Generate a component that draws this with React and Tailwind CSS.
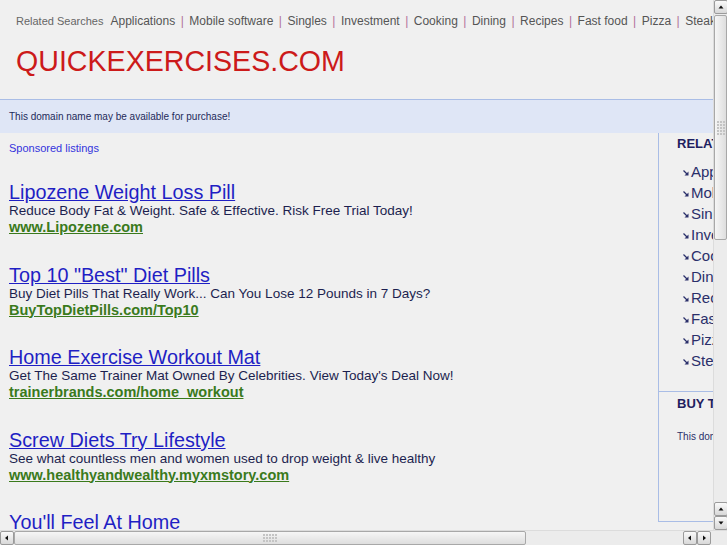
import React from "react";

const related = [
  "Applications",
  "Mobile software",
  "Singles",
  "Investment",
  "Cooking",
  "Dining",
  "Recipes",
  "Fast food",
  "Pizza",
  "Steak",
];

const ads = [
  {
    title: "Lipozene Weight Loss Pill",
    desc: "Reduce Body Fat & Weight. Safe & Effective. Risk Free Trial Today!",
    url: "www.Lipozene.com",
  },
  {
    title: 'Top 10 "Best" Diet Pills',
    desc: "Buy Diet Pills That Really Work... Can You Lose 12 Pounds in 7 Days?",
    url: "BuyTopDietPills.com/Top10",
  },
  {
    title: "Home Exercise Workout Mat",
    desc: "Get The Same Trainer Mat Owned By Celebrities. View Today's Deal Now!",
    url: "trainerbrands.com/home_workout",
  },
  {
    title: "Screw Diets Try Lifestyle",
    desc: "See what countless men and women used to drop weight & live healthy",
    url: "www.healthyandwealthy.myxmstory.com",
  },
  {
    title: "You'll Feel At Home",
    desc: "Find the best deals online today.",
    url: "www.example.com",
  },
];

const Arrow = ({ dir }) => {
  const pts = {
    up: "1.5,5.5 6.5,5.5 4,2.5",
    down: "1.5,2.5 6.5,2.5 4,5.5",
    left: "5,1.5 5,6.5 2,4",
    right: "3,1.5 3,6.5 6,4",
  };
  return (
    <svg width="8" height="8" viewBox="0 0 8 8">
      <polygon points={pts[dir]} fill="#111" />
    </svg>
  );
};

const ScrollBtn = ({ dir }) => (
  <div className="w-[14px] h-[14px] flex items-center justify-center rounded-[2px] border border-[#9a9a9a] bg-gradient-to-b from-[#fafafa] to-[#d8d8d8]">
    <Arrow dir={dir} />
  </div>
);

const Grip = ({ vertical }) => (
  <div className={vertical ? "grid grid-cols-3 gap-[1px]" : "grid grid-cols-5 gap-[1px]"}>
    {Array.from({ length: 15 }).map((_, i) => (
      <div key={i} className="w-[2px] h-[2px] bg-[#c4c4c4]" />
    ))}
  </div>
);

const SmallArrow = () => (
  <svg width="6" height="6" viewBox="0 0 6 6" className="mr-[2px] shrink-0">
    <path d="M0.5 0.5 L4 4" stroke="#2a2f6a" strokeWidth="1.2" />
    <polygon points="5.5,1.5 5.5,5.5 1.5,5.5" fill="#2a2f6a" />
  </svg>
);

export default function App() {
  return (
    <div
      className="w-[727px] h-[545px] flex flex-col overflow-hidden bg-[#f0f0f0]"
      style={{ fontFamily: '"Liberation Sans", Arial, sans-serif' }}
    >
      <div className="flex flex-1 min-h-0">
        {/* page viewport */}
        <div className="flex-1 overflow-hidden">
          <div className="w-[940px]">
            {/* header */}
            <div className="pl-4 pt-[14px] pb-[22px]">
              <div className="flex items-baseline leading-[14px] whitespace-nowrap">
                <span className="text-[11px] text-[#666] mr-[7px]">Related Searches</span>
                {related.map((r, i) => (
                  <span key={r} className="flex items-baseline">
                    {i > 0 && <span className="text-[12px] text-[#b0709a] mx-[5.5px]">|</span>}
                    <span className="text-[12px] text-[#555]">{r}</span>
                  </span>
                ))}
              </div>
              <div className="mt-[17px] text-[28.6px] leading-[32px] text-[#cc1a1a]">
                QUICKEXERCISES.COM
              </div>
            </div>

            {/* notice band */}
            <div className="border-t border-[#a9bde6] h-[34px] bg-[#dfe6f6] flex items-center pl-[9px] text-[10px] text-[#1e2a5a]">
              This domain name may be available for purchase!
            </div>

            {/* main */}
            <div className="flex">
              <div className="w-[658px] shrink-0 pl-[9px]">
                <div className="pt-[8px] text-[11px] leading-[14px] text-[#3333dd]">
                  Sponsored listings
                </div>
                <div className="mt-[27px] flex flex-col gap-[28.5px]">
                  {ads.map((a) => (
                    <div key={a.title} className="whitespace-nowrap">
                      <div className="text-[19.8px] leading-[20px] text-[#1f1fc4] underline">{a.title}</div>
                      <div className="text-[13.5px] leading-[17px] text-[#1c1f4f]">{a.desc}</div>
                      <div className="text-[14.5px] leading-[17px] font-bold text-[#3a7a1c] underline">
                        {a.url}
                      </div>
                    </div>
                  ))}
                </div>
              </div>

              {/* right column */}
              <div className="w-[240px] shrink-0 border-l border-b border-[#a9bde6] h-[389px] flex flex-col">
                <div className="pl-[18px] pt-[3px] pb-[19px] border-b border-[#a9bde6]">
                  <div className="text-[13px] leading-[16px] font-bold text-[#1e2060]">RELATED SEARCHES</div>
                  <div className="mt-[10px] pl-[6px]">
                    {related.map((r) => (
                      <div key={r} className="flex items-center h-[21px] text-[15px] text-[#2a2f6a]">
                        <SmallArrow />
                        {r}
                      </div>
                    ))}
                  </div>
                </div>
                <div className="pl-[18px] pt-[4px]">
                  <div className="text-[13px] leading-[16px] font-bold text-[#1e2060]">BUY THIS DOMAIN</div>
                  <div className="mt-[19px] text-[10px] leading-[12px] text-[#2a2f6a] whitespace-nowrap">
                    This domain name may be available for purchase!
                  </div>
                </div>
              </div>
            </div>
          </div>
        </div>

        {/* vertical scrollbar */}
        <div className="w-[14px] flex flex-col bg-[#ececec] border-l border-[#dcdcdc]">
          <ScrollBtn dir="up" />
          <div className="mt-[1px] h-[225px] rounded-[2px] border border-[#a8a8a8] bg-gradient-to-r from-[#f6f6f6] to-[#dedede] flex items-center justify-center">
            <Grip vertical />
          </div>
          <div className="flex-1" />
          <ScrollBtn dir="up" />
          <ScrollBtn dir="down" />
        </div>
      </div>

      {/* horizontal scrollbar */}
      <div className="h-[15px] flex bg-[#ececec] border-t border-[#dcdcdc]">
        <ScrollBtn dir="left" />
        <div className="w-[512px] h-[14px] rounded-[2px] border border-[#a8a8a8] bg-gradient-to-b from-[#f6f6f6] to-[#dedede] flex items-center justify-center">
          <Grip />
        </div>
        <div className="flex-1" />
        <ScrollBtn dir="left" />
        <ScrollBtn dir="right" />
        <div className="w-[16px] bg-[#ececec]" />
      </div>
    </div>
  );
}
